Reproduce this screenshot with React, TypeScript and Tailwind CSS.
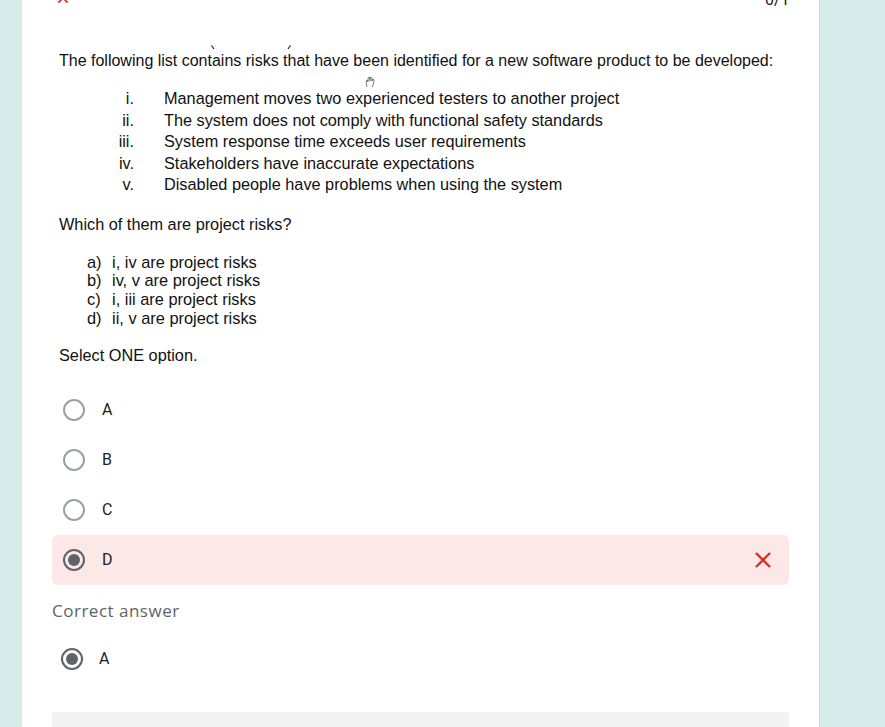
import React from "react";

const Radio = ({ checked }: { checked?: boolean }) => (
  <div
    className={
      "w-[22px] h-[22px] rounded-full border-2 flex items-center justify-center shrink-0 " +
      (checked ? "border-[#5f6368]" : "border-[#9aa0a6]")
    }
  >
    {checked && <div className="w-[12px] h-[12px] rounded-full bg-[#5f6368]" />}
  </div>
);

const XIcon = ({ className }: { className?: string }) => (
  <svg className={className} viewBox="0 0 24 24" fill="none">
    <path d="M5 5 L19 19 M19 5 L5 19" stroke="#d93025" strokeWidth="2.4" />
  </svg>
);

export default function App() {
  const risks: [string, string][] = [
    ["i.", "Management moves two experienced testers to another project"],
    ["ii.", "The system does not comply with functional safety standards"],
    ["iii.", "System response time exceeds user requirements"],
    ["iv.", "Stakeholders have inaccurate expectations"],
    ["v.", "Disabled people have problems when using the system"],
  ];
  const opts: [string, string][] = [
    ["a)", "i, iv are project risks"],
    ["b)", "iv, v are project risks"],
    ["c)", "i, iii are project risks"],
    ["d)", "ii, v are project risks"],
  ];
  return (
    <div className="w-[885px] h-[727px] overflow-hidden bg-[#d8eceb] flex">
      <div className="ml-[22px] w-[798px] h-full bg-white border-r border-[#cfd8d8] flex flex-col overflow-hidden">
        {/* header (scrolled partially out of view) */}
        <div className="relative h-0">
          <svg className="absolute left-[34px] top-[-9px] w-[14px] h-[14px]" viewBox="0 0 24 24">
            <path d="M4 4 L20 20 M20 4 L4 20" stroke="#d93025" strokeWidth="3" />
          </svg>
          <svg className="absolute left-[73px] top-[-8px] w-[13px] h-[13px]" viewBox="0 0 24 24" fill="none">
            <circle cx="12" cy="6" r="7" stroke="#d93025" strokeWidth="3" />
            <path d="M16 10 L21 14" stroke="#e37400" strokeWidth="3" />
          </svg>
          <div
            className="absolute left-[743px] top-[-12px] text-[16px] text-[#202124]"
            style={{ fontFamily: "Roboto, sans-serif" }}
          >
            0/1
          </div>
        </div>

        <div className="pl-[37px] pt-[51px]" style={{ fontFamily: "'Liberation Sans', Arial, sans-serif" }}>
          <div className="relative text-[16px] leading-[20px] text-[#111]">
            The following list contains risks that have been identified for a new software product to be developed:
            <svg className="absolute left-[152px] top-[-6px] w-[4px] h-[5px]" viewBox="0 0 4 5">
              <path d="M0.5 0.5 L3 4" stroke="#222" strokeWidth="1.2" />
            </svg>
            <svg className="absolute left-[228px] top-[-6px] w-[4px] h-[5px]" viewBox="0 0 4 5">
              <path d="M3.5 0.5 L1 4" stroke="#222" strokeWidth="1.2" />
            </svg>
          </div>
          <div className="relative mt-[17px] flex flex-col text-[16.3px] leading-[21.5px] text-[#111]">
            <svg className="absolute left-[305px] top-[-12px] w-[12px] h-[12px]" viewBox="0 0 12 12" fill="none">
              <path d="M3 11 L2 6 L3 4 L4 6 L4 2 L5.5 1 L6 5 L6.5 1.5 L8 2 L8 5 L9 3 L10 4 L9.5 8 L8 11" stroke="#444" strokeWidth="0.7" />
            </svg>
            {risks.map(([n, t]) => (
              <div key={n} className="flex">
                <div className="w-[76px] text-right pr-[1px]">{n}</div>
                <div className="ml-[29px]">{t}</div>
              </div>
            ))}
          </div>
          <div className="mt-[18px] text-[16.3px] leading-[20px] text-[#111]">Which of them are project risks?</div>
          <div className="mt-[19px] flex flex-col text-[16.4px] leading-[18.7px] text-[#111]">
            {opts.map(([n, t]) => (
              <div key={n} className="flex">
                <div className="ml-[28px] w-[25px]">{n}</div>
                <div>{t}</div>
              </div>
            ))}
          </div>
          <div className="mt-[18px] text-[16.3px] leading-[20px] text-[#111]">Select ONE option.</div>
        </div>

        <div className="mt-[20px] px-[30px] flex flex-col" style={{ fontFamily: "Roboto, sans-serif" }}>
          {["A", "B", "C"].map((l) => (
            <div key={l} className="h-[50px] flex items-center pl-[11px]">
              <Radio />
              <span className="ml-[17px] text-[16px] text-[#202124]">{l}</span>
            </div>
          ))}
          <div className="h-[50px] flex items-center pl-[11px] bg-[#fce8e6] rounded-[6px] pr-[14px]">
            <Radio checked />
            <span className="ml-[17px] text-[16px] text-[#202124]">D</span>
            <XIcon className="ml-auto w-[24px] h-[24px]" />
          </div>
          <div
            className="mt-[13px] text-[17px] text-[#5f6368] tracking-[0.5px]"
            style={{ fontFamily: "'Open Sans', Roboto, sans-serif" }}
          >
            Correct answer
          </div>
          <div className="mt-[24px] h-[22px] flex items-center pl-[9px]">
            <Radio checked />
            <span className="ml-[16px] text-[16px] text-[#202124]">A</span>
          </div>
          <div className="mt-[42px] h-[40px] bg-[#f3f3f3]" />
        </div>
      </div>
    </div>
  );
}
